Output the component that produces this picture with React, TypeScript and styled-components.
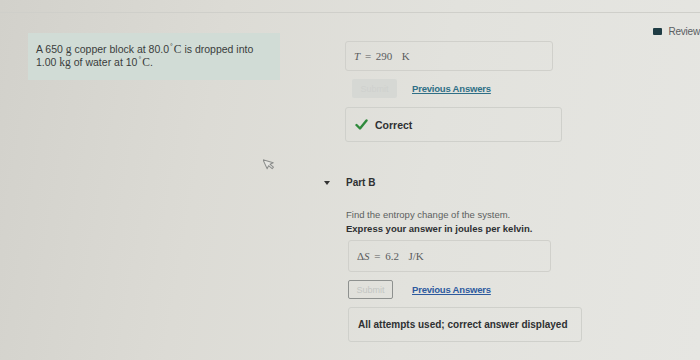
import React from "react";
import styled, { createGlobalStyle } from "styled-components";

const Global = createGlobalStyle`
  html, body { margin: 0; padding: 0; }
  body {
    width: 700px; height: 360px; overflow: hidden;
    font-family: "Liberation Sans", Arial, sans-serif;
    color: #2f3030;
  }
`;

const Page = styled.div`
  width: 700px; height: 360px;
  background: linear-gradient(100deg, #d2d1cb 0%, #dcdbd5 30%, #e2e2dd 60%, #e6e6e2 100%);
  display: flex; flex-direction: column;
  overflow: hidden;
`;

const TopRule = styled.div`
  height: 12px;
  border-bottom: 1px solid #cfcfca;
  flex: none;
`;

const Body = styled.div`
  display: flex;
  flex: 1;
`;

const LeftCol = styled.div`
  width: 345px;
  flex: none;
  padding: 20px 0 0 28px;
  box-sizing: border-box;
  display: flex; flex-direction: column;
`;

const Problem = styled.div`
  width: 252px; height: 47px;
  box-sizing: border-box;
  background: #d1dcd6;
  padding: 10px 8px;
  font-size: 10.5px;
  line-height: 13px;
  color: #3a3c3c;
`;

const Serif = styled.span`
  font-family: "Liberation Serif", "Times New Roman", serif;
  font-size: 11.5px;
`;

const Sup = styled.sup`
  font-size: 7px;
  vertical-align: 4px;
  line-height: 0;
  margin: 0 1px;
`;

const Cursor = styled.svg`
  margin: 75px 0 0 235px;
  width: 14px; height: 16px;
`;

const RightCol = styled.div`
  flex: 1;
  display: flex; flex-direction: column;
  align-items: flex-start;
`;

const ReviewRow = styled.div`
  align-self: stretch;
  height: 14px;
  margin-top: 11px;
  display: flex; justify-content: flex-end; align-items: center;
  gap: 6px;
  font-size: 10px;
  letter-spacing: -0.2px;
  color: #5a5e62;
`;

const ReviewIcon = styled.span`
  width: 9px; height: 7px;
  background: #1f3c44;
  border-radius: 1px;
  display: inline-block;
`;

const AnswerBox = styled.div<{ $w: number; $indent?: number }>`
  width: ${p => p.$w}px; height: 30px;
  margin-left: ${p => p.$indent ?? 0}px;
  box-sizing: border-box;
  border: 1px solid #d0d0cb;
  border-radius: 3px;
  display: flex; align-items: center;
  padding-left: 8px;
  font-family: "Liberation Serif", "Times New Roman", serif;
  font-size: 11px;
  color: #5a5c5e;
  word-spacing: 2px;
`;

const Italic = styled.i``;

const ActionRow = styled.div<{ $top: number; $indent: number; $gap: number }>`
  margin-top: ${p => p.$top}px;
  margin-left: ${p => p.$indent}px;
  display: flex; align-items: center;
  gap: ${p => p.$gap}px;
`;

const SubmitBtn = styled.div<{ $outlined?: boolean }>`
  width: 45px; height: 19px;
  box-sizing: border-box;
  border: 1px solid ${p => (p.$outlined ? "#8e918f" : "transparent")};
  background: ${p => (p.$outlined ? "transparent" : "#d6d8d4")};
  border-radius: 2px;
  font-size: 9px;
  color: ${p => (p.$outlined ? "#c3c6c3" : "#cfd1ce")};
  display: flex; align-items: center; justify-content: center;
`;

const PrevLink = styled.a<{ $color: string }>`
  font-size: 9.5px;
  font-weight: bold;
  color: ${p => p.$color};
  text-decoration: underline;
  letter-spacing: -0.2px;
`;

const Feedback = styled.div<{ $w: number; $top: number; $indent: number; $size: number }>`
  width: ${p => p.$w}px; height: 35px;
  margin-top: ${p => p.$top}px;
  margin-left: ${p => p.$indent}px;
  box-sizing: border-box;
  border: 1px solid #cfd0cb;
  border-radius: 3px;
  display: flex; align-items: center; gap: 7px;
  padding-left: 9px;
  font-size: ${p => p.$size}px;
  font-weight: bold;
  color: #2e3032;
`;

const PartHeader = styled.div`
  margin: 35px 0 0 -21px;
  display: flex; align-items: center; gap: 16px;
  font-size: 10px;
  font-weight: bold;
  color: #2e3032;
`;

const Caret = styled.span`
  width: 0; height: 0;
  border-left: 3.5px solid transparent;
  border-right: 3.5px solid transparent;
  border-top: 4px solid #333;
`;

const Prompt = styled.div<{ $bold?: boolean; $top: number }>`
  margin-top: ${p => p.$top}px;
  margin-left: 1px;
  font-size: 9.5px;
  font-weight: ${p => (p.$bold ? "bold" : "normal")};
  color: ${p => (p.$bold ? "#2e3032" : "#5c5f60")};
  line-height: 12px;
`;

export default function App() {
  return (
    <Page>
      <Global />
      <TopRule />
      <Body>
        <LeftCol>
          <Problem>
            A 650 <Serif>g</Serif> copper block at 80.0<Sup>°</Sup><Serif>C</Serif> is dropped into
            <br />
            1.00 <Serif>kg</Serif> of water at 10<Sup>°</Sup><Serif>C</Serif>.
          </Problem>
          <Cursor viewBox="0 0 14 16">
            <path
              d="M2 2 L2 12 L4.6 9.8 L6.6 14 L8.4 13.2 L6.5 9.2 L10 9.2 Z"
              fill="#e6e6e2"
              stroke="#8a8c8a"
              strokeWidth="1"
              strokeLinejoin="round"
              transform="rotate(-25 7 8)"
            />
          </Cursor>
        </LeftCol>
        <RightCol>
          <ReviewRow>
            <ReviewIcon />
            Review
          </ReviewRow>
          <AnswerBox $w={208} style={{ marginTop: 3 }}>
            <Italic>T</Italic>&nbsp;=&nbsp;290&nbsp;&nbsp;K
          </AnswerBox>
          <ActionRow $top={8} $indent={7} $gap={15}>
            <SubmitBtn>Submit</SubmitBtn>
            <PrevLink $color="#2f6f86">Previous Answers</PrevLink>
          </ActionRow>
          <Feedback $w={217} $top={9} $indent={0} $size={10.5}>
            <svg width="13" height="11" viewBox="0 0 13 11">
              <path d="M1.5 6 L5 9.5 L11.5 1.5" fill="none" stroke="#2f8a3c" strokeWidth="2.4" strokeLinecap="round" strokeLinejoin="round" />
            </svg>
            <span>Correct</span>
          </Feedback>
          <PartHeader>
            <Caret />
            <span>Part B</span>
          </PartHeader>
          <Prompt $top={21}>Find the entropy change of the system.</Prompt>
          <Prompt $top={2} $bold>Express your answer in joules per kelvin.</Prompt>
          <AnswerBox $w={203} $indent={3} style={{ marginTop: 5, height: 32 }}>
            Δ<Italic>S</Italic>&nbsp;=&nbsp;6.2&nbsp;&nbsp;J/K
          </AnswerBox>
          <ActionRow $top={8} $indent={3} $gap={19}>
            <SubmitBtn $outlined>Submit</SubmitBtn>
            <PrevLink $color="#2d5a9e">Previous Answers</PrevLink>
          </ActionRow>
          <Feedback $w={234} $top={8} $indent={3} $size={10}>
            All attempts used; correct answer displayed
          </Feedback>
        </RightCol>
      </Body>
    </Page>
  );
}
